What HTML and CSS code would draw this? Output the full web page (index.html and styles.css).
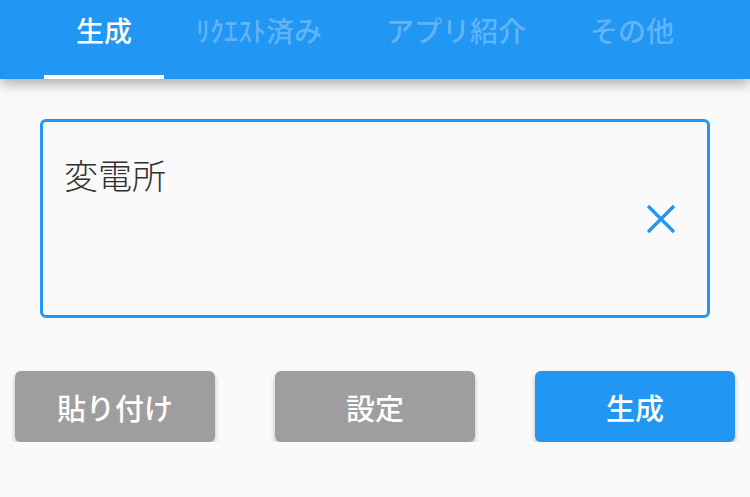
FILE: index.html
```html
<!doctype html>
<html>
    <head>
        <meta charset="UTF-8"/>
        <title>生成</title>
        <link rel="stylesheet" href="styles.css">
    </head>
    <body>
    <div class="tabbar">
        <div class="tab on">生成</div>
        <div class="tab">ﾘｸｴｽﾄ済み</div>
        <div class="tab">アプリ紹介</div>
        <div class="tab">その他</div>
    </div>
    <div class="page">
        <div class="field">
            <div class="field-text">変電所</div>
            <svg class="clear" width="30" height="30" viewBox="0 0 30 30">
                <path d="M2 2 L28 28 M28 2 L2 28" stroke="#2196f3" stroke-width="3.2" fill="none"/>
            </svg>
        </div>
        <div class="btns">
            <div class="btn grey">貼り付け</div>
            <div class="btn grey">設定</div>
            <div class="btn blue">生成</div>
        </div>
    </div>
    </body>
</html>
```

FILE: styles.css
```css
* {
    margin: 0px;
    padding: 0px;
    box-sizing: border-box;
}
body {
    background: #fafafa;
    font-family: "Noto Sans CJK JP", "Noto Sans", sans-serif;
}
.tabbar {
    height: 79px;
    background: #2196f3;
    display: flex;
    justify-content: center;
    box-shadow: 0 5px 12px rgba(0,0,0,.3);
    position: relative;
    z-index: 2;
}
.tab {
    padding: 0 32px;
    height: 79px;
    line-height: 60px;
    font-size: 28px;
    font-weight: 500;
    color: rgba(255,255,255,.3);
    white-space: nowrap;
    border-bottom: 4px solid transparent;
}
.tab.on {
    color: #fff;
    border-bottom-color: #fff;
}
.page {
    padding-top: 40px;
}
.field {
    margin: 0 40px;
    height: 199px;
    border: 3px solid #2196f3;
    border-radius: 6px;
    display: flex;
    align-items: center;
    padding: 0 31px 0 21px;
    position: relative;
}
.field-text {
    position: absolute;
    left: 21px;
    top: 33px;
    font-size: 34px;
    line-height: 40px;
    font-weight: 300;
    color: #303030;
}
.clear {
    margin-left: auto;
}
.btns {
    display: flex;
    justify-content: space-between;
    padding: 0 15px;
    margin-top: 53px;
}
.btn {
    width: 200px;
    height: 71px;
    border-radius: 6px;
    display: flex;
    align-items: center;
    justify-content: center;
    color: #fff;
    font-size: 29px;
    font-weight: 500;
    box-shadow: 0 3px 5px rgba(0,0,0,.25);
}
.grey {
    background: #9e9e9e;
}
.blue {
    background: #2196f3;
}
```
